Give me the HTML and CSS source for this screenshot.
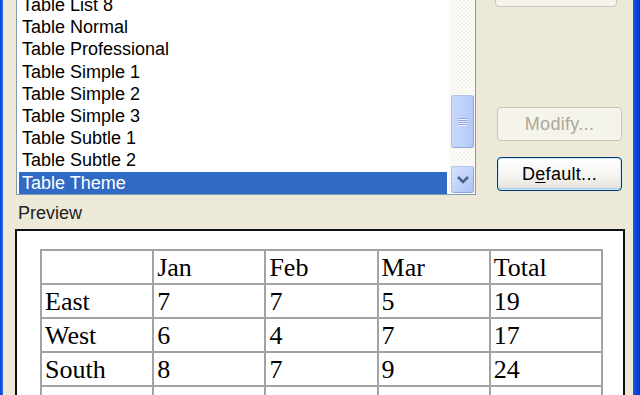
FILE: index.html
```html
<!DOCTYPE html>
<html>
<head>
<meta charset="utf-8">
<link rel="stylesheet" href="styles.css">
</head>
<body>
<div class="frame frame-left"></div>
<div class="client">
  <div class="top-row">
    <div class="listbox">
      <div class="list">
        <div class="item">Table List 8</div>
        <div class="item">Table Normal</div>
        <div class="item">Table Professional</div>
        <div class="item">Table Simple 1</div>
        <div class="item">Table Simple 2</div>
        <div class="item">Table Simple 3</div>
        <div class="item">Table Subtle 1</div>
        <div class="item">Table Subtle 2</div>
        <div class="item selected">Table Theme</div>
      </div>
      <div class="scrollbar">
        <div class="thumb">
          <svg class="grip" width="9" height="8" viewBox="0 0 9 8">
            <rect x="0" y="0" width="9" height="1" fill="#8aa3e6"/>
            <rect x="0" y="1" width="9" height="1" fill="#eef3ff"/>
            <rect x="0" y="2" width="9" height="1" fill="#8aa3e6"/>
            <rect x="0" y="3" width="9" height="1" fill="#eef3ff"/>
            <rect x="0" y="4" width="9" height="1" fill="#8aa3e6"/>
            <rect x="0" y="5" width="9" height="1" fill="#eef3ff"/>
            <rect x="0" y="6" width="9" height="1" fill="#8aa3e6"/>
            <rect x="0" y="7" width="9" height="1" fill="#eef3ff"/>
          </svg>
        </div>
        <div class="sb-spacer"></div>
        <div class="sb-button">
          <svg width="14" height="10" viewBox="0 0 14 10">
            <polyline points="2,2 7,7 12,2" fill="none" stroke="#4d6185" stroke-width="2.6"/>
          </svg>
        </div>
      </div>
    </div>
    <div class="buttons">
      <div class="btn btn-disabled btn-top">Delete...</div>
      <div class="btn btn-disabled btn-modify">Modify...</div>
      <div class="btn btn-default">D<u>e</u>fault...</div>
    </div>
  </div>
  <div class="preview-label">Preview</div>
  <div class="preview">
    <table class="sample">
      <tr><td></td><td>Jan</td><td>Feb</td><td>Mar</td><td>Total</td></tr>
      <tr><td>East</td><td>7</td><td>7</td><td>5</td><td>19</td></tr>
      <tr><td>West</td><td>6</td><td>4</td><td>7</td><td>17</td></tr>
      <tr><td>South</td><td>8</td><td>7</td><td>9</td><td>24</td></tr>
      <tr><td>Total</td><td>21</td><td>18</td><td>21</td><td>60</td></tr>
    </table>
  </div>
</div>
<div class="frame frame-right"></div>
</body>
</html>
```

FILE: styles.css
```css
html, body {
  margin: 0;
  padding: 0;
}
body {
  width: 640px;
  height: 395px;
  overflow: hidden;
  background: #ece9d8;
  display: flex;
  font-family: "Liberation Sans", Arial, sans-serif;
  font-size: 18px;
  color: #000;
}
.frame-left {
  width: 3px;
  flex: none;
  background: linear-gradient(to right, #0a3fd2, #1a5ee8 70%, #3a77ee);
}
.frame-right {
  width: 7px;
  flex: none;
  background: linear-gradient(to right, #1c5ce6, #0a46d8 40%, #0831d9);
}
.client {
  flex: 1;
  min-width: 0;
  padding-left: 13px;
  display: flex;
  flex-direction: column;
}
.top-row {
  display: flex;
  margin-top: -7px;
  align-items: flex-start;
}
.listbox {
  width: 460px;
  height: 202px;
  box-sizing: border-box;
  border: 1px solid #7f9db9;
  background: #fff;
  display: flex;
  flex: none;
}
.list {
  flex: 1;
  padding: 0 2px;
}
.item {
  height: 22.2px;
  line-height: 22px;
  padding-left: 3px;
  white-space: nowrap;
}
.item.selected {
  background: #316ac5;
  color: #fff;
}
.scrollbar {
  width: 26px;
  flex: none;
  display: flex;
  flex-direction: column;
  align-items: flex-start;
  padding-left: 2px;
  box-sizing: border-box;
  background-color: #f5f4ec;
  background-image:
    linear-gradient(45deg, #fdfdfb 25%, transparent 25%, transparent 75%, #fdfdfb 75%),
    linear-gradient(45deg, #fdfdfb 25%, transparent 25%, transparent 75%, #fdfdfb 75%);
  background-size: 4px 4px;
  background-position: 0 0, 2px 2px;
}
.thumb {
  margin-top: 101px;
  width: 23px;
  height: 53px;
  box-sizing: border-box;
  border: 1px solid #b2c3f0;
  border-right-color: #8ea5e2;
  border-bottom-color: #8ea5e2;
  border-radius: 3px;
  background: linear-gradient(to right, #cad8fb, #bdd0fa 60%, #b3c8f7);
  display: flex;
  align-items: center;
  justify-content: center;
}
.sb-spacer {
  flex: 1;
}
.sb-button {
  width: 23px;
  height: 27px;
  margin-bottom: 1px;
  box-sizing: border-box;
  border: 1px solid #b2c3f0;
  border-right-color: #8ea5e2;
  border-bottom-color: #8ea5e2;
  border-radius: 3px;
  background: linear-gradient(to bottom right, #d6e2fd, #bcd0fa 60%, #aec4f6);
  display: flex;
  align-items: center;
  justify-content: center;
}
.buttons {
  margin-left: 21px;
  width: 125px;
  display: flex;
  flex-direction: column;
  flex: none;
}
.btn {
  height: 34px;
  box-sizing: border-box;
  border-radius: 4px;
  display: flex;
  align-items: center;
  justify-content: center;
  white-space: nowrap;
  letter-spacing: 0.3px;
}
.btn-disabled {
  border: 1px solid #c9c7ba;
  background: #f5f4ea;
  color: #aca899;
}
.btn-top {
  margin-top: -20px;
  width: 122px;
  margin-left: -2px;
}
.btn-modify {
  margin-top: 100px;
}
.btn-default {
  margin-top: 16px;
  border: 1px solid #003c74;
  background: linear-gradient(to bottom, #ffffff, #f4f3ee 60%, #e3e1d6);
  box-shadow: inset 0 0 0 1px #cee7ff, inset 0 -1px 0 1px #a9c9f0;
  color: #000;
}
.btn-default u {
  text-decoration-thickness: 1px;
  text-underline-offset: 2px;
}
.preview-label {
  margin-top: 8px;
  margin-left: 2px;
  height: 20px;
  line-height: 20px;
  color: #222;
}
.preview {
  margin-top: 6px;
  margin-left: -1px;
  width: 610px;
  flex: 1;
  box-sizing: border-box;
  border: 2px solid #111;
  border-bottom: none;
  background: #fff;
  padding: 18px 0 0 23px;
}
.sample {
  border-collapse: collapse;
  width: 563px;
  table-layout: fixed;
  font-family: "Liberation Serif", "Times New Roman", serif;
  font-size: 26px;
}
.sample td {
  border: 2px solid #a3a3a3;
  height: 31.3px;
  padding: 2px 3px 0 3px;
  line-height: 30px;
  vertical-align: top;
  box-sizing: border-box;
}
```
